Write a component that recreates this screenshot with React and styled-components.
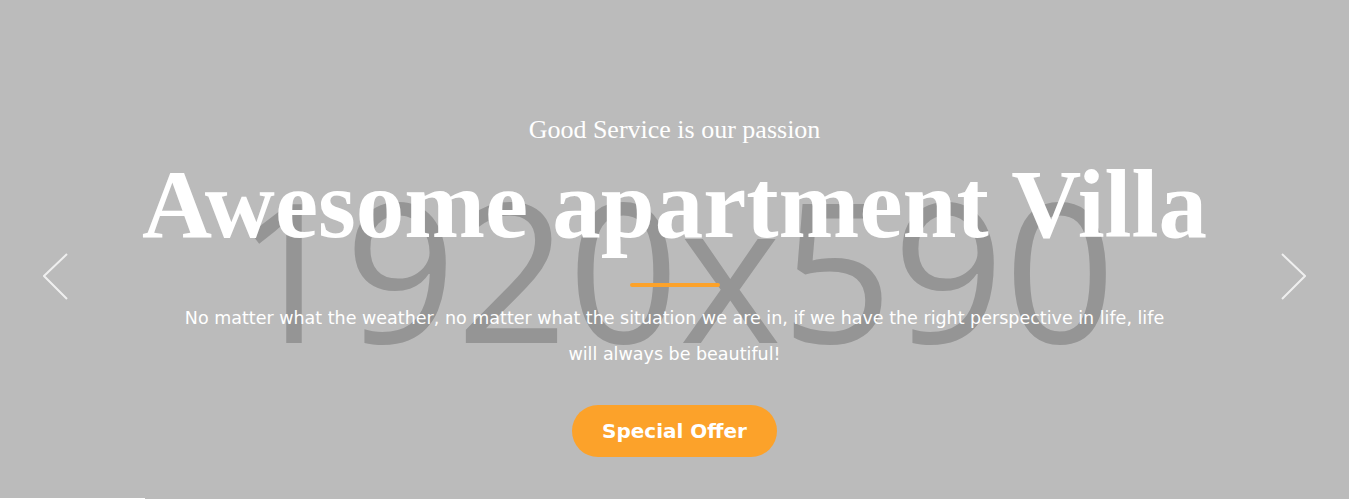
import React from "react";
import styled, { createGlobalStyle } from "styled-components";

const GlobalStyle = createGlobalStyle`
    html, body {
        margin: 0;
        padding: 0;
        background: #bbbbbb;
    }
`;

export default function App() {
    return (
        <>
            <GlobalStyle />
            <Slide>
                <Placeholder>1920x590</Placeholder>

                <Arrow $side="left" aria-label="Previous">
                    <svg width="26" height="48" viewBox="0 0 26 48">
                        <polyline points="24,1 1,23 24,46" />
                    </svg>
                </Arrow>
                <Arrow $side="right" aria-label="Next">
                    <svg width="26" height="48" viewBox="0 0 26 48">
                        <polyline points="2,1 25,23 2,46" />
                    </svg>
                </Arrow>

                <Content>
                    <Subtitle>Good Service is our passion</Subtitle>
                    <Title>Awesome apartment Villa</Title>
                    <Divider />
                    <Text>
                        No matter what the weather, no matter what the situation we are in, if we have the right perspective in life, life
                        <br />
                        will always be beautiful!
                    </Text>
                    <Button>Special Offer</Button>
                </Content>

                <Progress style={{ width: "145px" }} />
            </Slide>
        </>
    );
}

// SLIDE *******************************************************

const Slide = styled.section`
    position: relative;
    width: 100%;
    height: 499px;
    background-color: #bbbbbb;
    overflow: hidden;
`;

const Placeholder = styled.div`
    position: absolute;
    left: 0;
    right: 0;
    top: 170px;
    text-align: center;
    font-family: "Open Sans", "DejaVu Sans", sans-serif;
    font-size: 195px;
    line-height: 1;
    color: #959595;
    user-select: none;
    z-index: 0;
`;

// ARROWS *******************************************************

const Arrow = styled.button`
    position: absolute;
    top: 253px;
    ${({ $side }) => ($side === "left" ? "left: 43px;" : "right: 43px;")}
    padding: 0;
    border: 0;
    background: none;
    cursor: pointer;
    z-index: 2;

    svg {
        display: block;
    }
    polyline {
        fill: none;
        stroke: rgba(245, 245, 245, 0.9);
        stroke-width: 2;
    }
`;

// CONTENT *******************************************************

const Content = styled.div`
    position: relative;
    z-index: 1;
    display: flex;
    flex-direction: column;
    align-items: center;
    padding-top: 114px;
    color: #ffffff;
    text-align: center;
`;

const Subtitle = styled.h4`
    margin: 0;
    font-family: "Liberation Serif", "Times New Roman", serif;
    font-weight: 400;
    font-size: 26px;
    line-height: 32px;
    color: #ffffff;
`;

const Title = styled.h1`
    margin: 4px 0 0;
    font-family: "Liberation Serif", "Times New Roman", serif;
    font-weight: 700;
    font-size: 97px;
    line-height: 110px;
    color: #ffffff;
    white-space: nowrap;
`;

const Divider = styled.span`
    display: block;
    width: 90px;
    height: 4px;
    margin-top: 23px;
    border-radius: 2px;
    background-color: #fca22a;
`;

const Text = styled.p`
    margin: 13px 0 0;
    font-family: "DejaVu Sans", "Noto Sans", sans-serif;
    font-size: 17.5px;
    line-height: 36px;
    color: #ffffff;
    white-space: nowrap;
`;

const Button = styled.button`
    margin-top: 33px;
    width: 205px;
    height: 52px;
    border: 0;
    border-radius: 26px;
    background-color: #fca22a;
    color: #ffffff;
    font-family: "DejaVu Sans", "Noto Sans", sans-serif;
    font-weight: 700;
    font-size: 20px;
    cursor: pointer;
`;

// PROGRESS *******************************************************

const Progress = styled.div`
    position: absolute;
    left: 0;
    bottom: 0;
    height: 1px;
    background-color: #ffffff;
    z-index: 2;
`;
